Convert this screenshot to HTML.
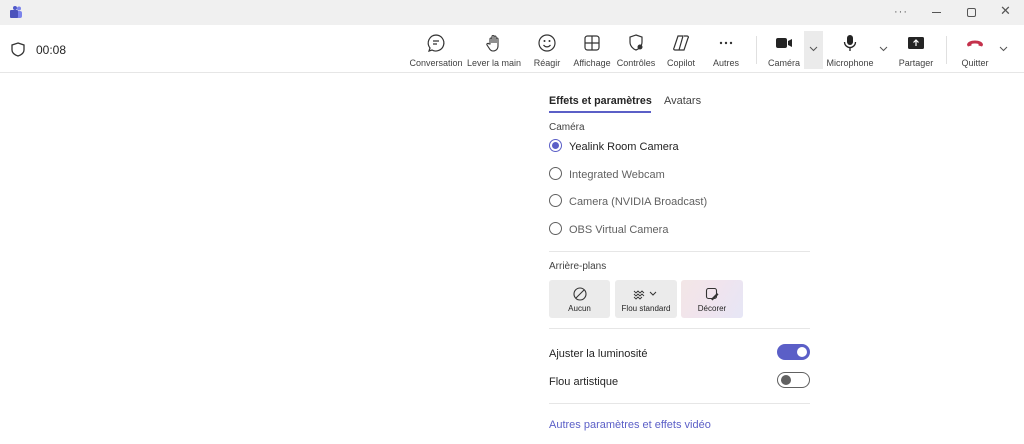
<!DOCTYPE html>
<html><head><meta charset="utf-8"><style>
*{margin:0;padding:0;box-sizing:border-box}
body{width:1024px;height:444px;background:#fff;font-family:"Liberation Sans",sans-serif;position:relative;overflow:hidden;color:#242424}
.a{position:absolute}
.tb{left:0;top:0;width:1024px;height:25px;background:#f0f0f0}
.bar{left:0;top:25px;width:1024px;height:48px;border-bottom:1px solid #e6e6e6;background:#fff}
.it{position:absolute;top:33px;width:60px;margin-left:-30px;text-align:center}
.it svg{display:block;margin:0 auto;width:20px;height:20px}
.it span{display:block;font-size:9px;color:#424242;margin-top:5px;white-space:nowrap}
.t{font-size:11px;color:#242424;white-space:nowrap;margin-top:2px}
.rad{width:13px;height:13px;border:1px solid #616161;border-radius:50%}
.hr{left:549px;width:261px;height:1px;background:#e6e6e6}
.btn{top:280px;height:38px;background:#ebebeb;border-radius:3px;text-align:center;font-size:8px;color:#242424}
.btn svg{display:block;margin:7px auto 3px}
</style></head><body>
<div class="a tb"></div>
<svg class="a" style="left:9px;top:6px" width="14" height="13" viewBox="0 0 14 13"><circle cx="10" cy="2.5" r="2" fill="#7b83eb"/><rect x="7" y="5" width="6" height="7" rx="2" fill="#7b83eb"/><circle cx="6" cy="2" r="2" fill="#5059c9"/><rect x="1" y="4" width="8" height="8" rx="1" fill="#4b53bc"/></svg>
<div class="a" style="left:894px;top:6px;font-size:11px;color:#555;letter-spacing:1px">···</div>
<div class="a" style="left:932px;top:12px;width:9px;height:1px;background:#555"></div>
<div class="a" style="left:967px;top:8px;width:9px;height:9px;border:1px solid #555;border-radius:2px"></div>
<div class="a" style="left:1000px;top:3px;font-size:13px;color:#555">✕</div>
<div class="a bar"></div>
<svg class="a" style="left:11px;top:42px" width="14" height="15" viewBox="0 0 14 15"><path d="M7 1 L13 3 V8 C13 11 10 13 7 14 C4 13 1 11 1 8 V3 Z" fill="none" stroke="#333" stroke-width="1.3"/></svg>
<div class="a" style="left:36px;top:43px;font-size:12px;color:#242424">00:08</div>

<div class="it" style="left:436px"><svg viewBox="0 0 20 20"><path d="M10 2a8 8 0 1 1-4 15l-3 1 1-3A8 8 0 0 1 10 2z" fill="none" stroke="#333" stroke-width="1.2"/><path d="M7 8h6M7 11h4" stroke="#333" stroke-width="1.2"/></svg><span>Conversation</span></div>
<div class="it" style="left:494px"><svg viewBox="0 0 20 20"><path d="M6 11V6a1 1 0 0 1 2 0v4V3.5a1 1 0 0 1 2 0V10V4a1 1 0 0 1 2 0v6V6a1 1 0 0 1 2 0v7c0 3-2 5-5 5-2 0-3-1-4-3l-2-3a1 1 0 0 1 2-1z" fill="none" stroke="#333" stroke-width="1.1"/></svg><span>Lever la main</span></div>
<div class="it" style="left:547px"><svg viewBox="0 0 20 20"><circle cx="10" cy="10" r="8" fill="none" stroke="#333" stroke-width="1.2"/><circle cx="7.5" cy="8" r="1" fill="#333"/><circle cx="12.5" cy="8" r="1" fill="#333"/><path d="M6.5 12c2 2.5 5 2.5 7 0" fill="none" stroke="#333" stroke-width="1.2"/></svg><span>Réagir</span></div>
<div class="it" style="left:592px"><svg viewBox="0 0 20 20"><rect x="3" y="3" width="14" height="14" rx="2.5" fill="none" stroke="#333" stroke-width="1.2"/><path d="M10 3v14M3 10h14" stroke="#333" stroke-width="1.2"/></svg><span>Affichage</span></div>
<div class="it" style="left:636px"><svg viewBox="0 0 20 20"><path d="M10 2l6 2v5c0 4-3 7-6 8-3-1-6-4-6-8V4z" fill="none" stroke="#333" stroke-width="1.2"/><circle cx="14" cy="14" r="2.5" fill="#333"/></svg><span>Contrôles</span></div>
<div class="it" style="left:681px"><svg viewBox="0 0 20 20"><path d="M7 3h5l-4 14H4c-1 0-2-1-1-2z M13 3h3c1 0 2 1 1 2l-4 12H8" fill="none" stroke="#333" stroke-width="1.2"/></svg><span>Copilot</span></div>
<div class="it" style="left:726px"><svg viewBox="0 0 20 20"><circle cx="5" cy="10" r="1.2" fill="#333"/><circle cx="10" cy="10" r="1.2" fill="#333"/><circle cx="15" cy="10" r="1.2" fill="#333"/></svg><span>Autres</span></div>
<div class="a" style="left:756px;top:36px;width:1px;height:28px;background:#e0e0e0"></div>
<div class="it" style="left:784px"><svg viewBox="0 0 20 20"><rect x="2" y="5" width="11" height="10" rx="2" fill="#242424"/><path d="M14 8l4-2v8l-4-2z" fill="#242424"/></svg><span>Caméra</span></div>
<div class="a" style="left:804px;top:31px;width:19px;height:38px;background:#ebebeb"></div>
<svg class="a" style="left:809px;top:46px" width="9" height="6" viewBox="0 0 9 6"><path d="M1 1l3.5 3.5L8 1" fill="none" stroke="#555" stroke-width="1"/></svg>
<div class="it" style="left:850px"><svg viewBox="0 0 20 20"><rect x="7" y="2" width="6" height="10" rx="3" fill="#242424"/><path d="M4.5 9a5.5 5.5 0 0 0 11 0M10 14.5V18" fill="none" stroke="#242424" stroke-width="1.3"/></svg><span>Microphone</span></div>
<svg class="a" style="left:879px;top:46px" width="9" height="6" viewBox="0 0 9 6"><path d="M1 1l3.5 3.5L8 1" fill="none" stroke="#555" stroke-width="1"/></svg>
<div class="it" style="left:916px"><svg viewBox="0 0 20 20"><rect x="2" y="4" width="16" height="12" rx="1.5" fill="#242424"/><path d="M10 13V7M7.5 9.5L10 7l2.5 2.5" fill="none" stroke="#fff" stroke-width="1.2"/></svg><span>Partager</span></div>
<div class="a" style="left:946px;top:36px;width:1px;height:28px;background:#e0e0e0"></div>
<div class="it" style="left:975px"><svg viewBox="0 0 20 20"><path d="M2 12c0-3 4-4.5 8-4.5s8 1.5 8 4.5l-1 1.5-3.5-1V11c-2-.7-5-.7-7 0v1.5L3 13.5z" fill="#c4314b"/></svg><span>Quitter</span></div>
<svg class="a" style="left:999px;top:46px" width="9" height="6" viewBox="0 0 9 6"><path d="M1 1l3.5 3.5L8 1" fill="none" stroke="#555" stroke-width="1"/></svg>

<div class="a t" style="left:549px;top:93px;font-weight:bold;font-size:10.7px">Effets et paramètres</div>
<div class="a t" style="left:664px;top:93px;color:#424242">Avatars</div>
<div class="a" style="left:549px;top:111px;width:102px;height:2px;background:#5b5fc7"></div>
<div class="a" style="left:549px;top:122px;font-size:10px;color:#424242">Caméra</div>
<div class="a rad" style="left:549px;top:139px;border-color:#5b5fc7"><div style="margin:2px;width:7px;height:7px;border-radius:50%;background:#5b5fc7"></div></div>
<div class="a t" style="left:569px;top:139px">Yealink Room Camera</div>
<div class="a rad" style="left:549px;top:167px"></div>
<div class="a t" style="left:569px;top:167px;color:#616161">Integrated Webcam</div>
<div class="a rad" style="left:549px;top:194px"></div>
<div class="a t" style="left:569px;top:194px;color:#616161">Camera (NVIDIA Broadcast)</div>
<div class="a rad" style="left:549px;top:222px"></div>
<div class="a t" style="left:569px;top:222px;color:#616161">OBS Virtual Camera</div>
<div class="a hr" style="top:251px"></div>
<div class="a" style="left:549px;top:261px;font-size:10px;color:#424242">Arrière-plans</div>
<div class="a btn" style="left:549px;width:61px"><svg width="14" height="14" viewBox="0 0 14 14"><circle cx="7" cy="7" r="6" fill="none" stroke="#333" stroke-width="1.1"/><path d="M3 11L11 3" stroke="#333" stroke-width="1.1"/></svg>Aucun</div>
<div class="a btn" style="left:615px;width:62px"><svg width="30" height="14" viewBox="0 0 30 14"><path d="M3 4l2 2 2-2 2 2 2-2 2 2M3 7l2 2 2-2 2 2 2-2 2 2M3 10l2 2 2-2 2 2 2-2" fill="none" stroke="#333" stroke-width=".9"/><path d="M19 5l3 3 3-3" fill="none" stroke="#333" stroke-width="1"/></svg>Flou standard</div>
<div class="a btn" style="left:681px;width:62px;background:linear-gradient(120deg,#f3e6e6,#f0e4ee 50%,#e6e6f6)"><svg width="14" height="14" viewBox="0 0 14 14"><rect x="1.5" y="1.5" width="10" height="10" rx="2" fill="none" stroke="#333" stroke-width="1.1"/><path d="M6 12l6-6 1.5 1.5-6 6z" fill="#333"/></svg>Décorer</div>
<div class="a hr" style="top:328px"></div>
<div class="a t" style="left:549px;top:346px">Ajuster la luminosité</div>
<div class="a" style="left:777px;top:344px;width:33px;height:16px;border-radius:8px;background:#5b5fc7"><div style="position:absolute;right:3px;top:3px;width:10px;height:10px;border-radius:50%;background:#fff"></div></div>
<div class="a t" style="left:549px;top:374px">Flou artistique</div>
<div class="a" style="left:777px;top:372px;width:33px;height:16px;border-radius:8px;border:1px solid #616161"><div style="position:absolute;left:3px;top:2px;width:10px;height:10px;border-radius:50%;background:#616161"></div></div>
<div class="a hr" style="top:403px"></div>
<div class="a t" style="left:549px;top:417px;color:#5b5fc7">Autres paramètres et effets vidéo</div>
</body></html>
